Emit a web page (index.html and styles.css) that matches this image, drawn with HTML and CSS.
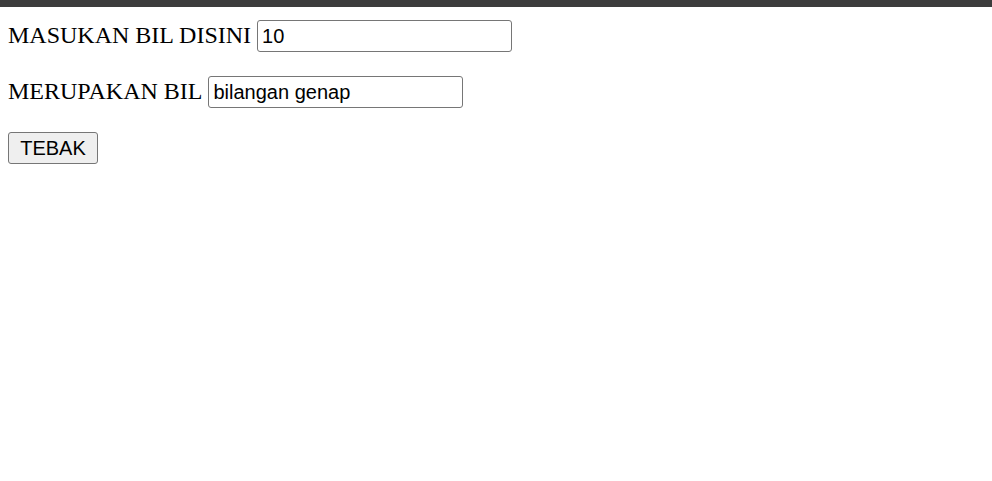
FILE: index.html
```html
<!DOCTYPE html>
<html>
<head>
<meta charset="utf-8">
<link rel="stylesheet" href="styles.css">
</head>
<body>
<div class="topbar"></div>
<form class="form">
  <div class="row"><label class="label" for="bil">MASUKAN BIL DISINI</label> <input class="field" id="bil" type="text" value="10"></div>
  <div class="row"><label class="label" for="hasil">MERUPAKAN BIL</label> <input class="field" id="hasil" type="text" value="bilangan genap"></div>
  <div class="row"><button class="btn" type="button">TEBAK</button></div>
</form>
</body>
</html>
```
FILE: styles.css
```css
html, body {
  margin: 0;
  padding: 0;
  background: #fff;
}
.topbar {
  height: 7px;
  background: #3c3c3c;
}
.form {
  display: flex;
  flex-direction: column;
  gap: 24px;
  padding: 13px 8px 0;
  margin: 0;
}
.row {
  display: flex;
  align-items: baseline;
  height: 32px;
}
.label {
  font-family: "Liberation Serif", "Times New Roman", serif;
  font-size: 24px;
  color: #000;
  margin-right: 6px;
}
.field {
  box-sizing: border-box;
  width: 255px;
  height: 32px;
  border: 1px solid #767676;
  border-radius: 3px;
  padding: 1px 4px;
  font-family: "Liberation Sans", Arial, sans-serif;
  font-size: 20px;
  color: #000;
  background: #fff;
  margin: 0;
}
.btn {
  box-sizing: border-box;
  width: 90px;
  height: 32px;
  border: 1px solid #767676;
  border-radius: 3px;
  background: #efefef;
  font-family: "Liberation Sans", Arial, sans-serif;
  font-size: 20px;
  color: #000;
  padding: 1px 7px;
  margin: 0;
}
```
